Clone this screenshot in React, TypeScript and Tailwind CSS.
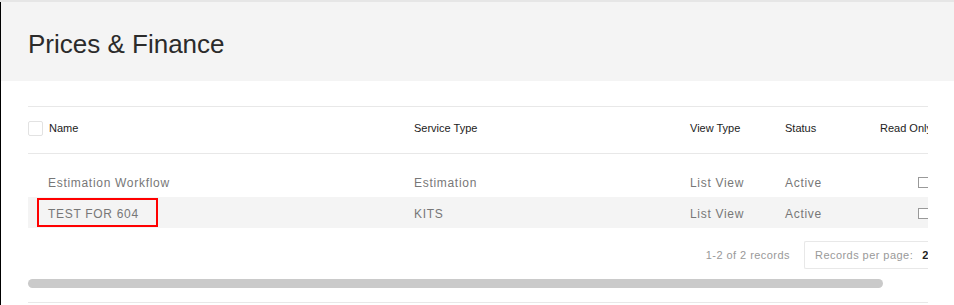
import React from "react";

type Row = { name: string; service: string; view: string; status: string; highlight?: boolean };

const rows: Array<Row> = [
  { name: "Estimation Workflow", service: "Estimation", view: "List View", status: "Active" },
  { name: "TEST FOR 604", service: "KITS", view: "List View", status: "Active", highlight: true },
];

export default function App() {
  return (
    <div className="w-[954px] h-[305px] overflow-hidden bg-white font-['Liberation_Sans',Arial,sans-serif]">
      <div className="h-[2px] bg-[#e6e6e6]" />
      <div className="h-[303px] border-l border-black">
        <div className="h-[79px] bg-[#f4f4f4] px-[27px] pt-[29px]">
          <h1 className="text-[26px] leading-[26px] text-[#2b2b2b] font-light">Prices &amp; Finance</h1>
        </div>

        <div className="pl-[27px] pr-[26px] pt-[25px]">
          <div className="overflow-hidden">
            <div className="w-[960px]">
              {/* header */}
              <div className="h-[48px] flex flex-row items-center border-t border-b border-[#e8e8e8] text-[11px] text-[#222] pb-[3px]">
                <div className="w-[386px] flex flex-row items-center">
                  <span className="w-[15px] h-[15px] border border-[#e2e2e2] rounded-[2px] bg-white" />
                  <span className="ml-[6px]">Name</span>
                </div>
                <div className="w-[276px]">Service Type</div>
                <div className="w-[95px]">View Type</div>
                <div className="w-[95px]">Status</div>
                <div className="flex-1">Read Only</div>
              </div>

              <div className="h-[12px]" />

              {rows.map((row) => {
                return (
                  <div
                    key={row.name}
                    className={`relative h-[31px] flex flex-row items-center pt-[2px] text-[12px] tracking-[0.7px] text-[#777] ${
                      row.highlight ? "bg-[#f4f4f4]" : ""
                    }`}
                  >
                    <div className="w-[386px] pl-[20px]">{row.name}</div>
                    <div className="w-[276px]">{row.service}</div>
                    <div className="w-[95px]">{row.view}</div>
                    <div className="w-[95px]">{row.status}</div>
                    <div className="flex-1 pl-[38px]">
                      <span className="block w-[11px] h-[11px] border border-[#999] bg-white" />
                    </div>
                    {row.highlight && (
                      <span className="absolute left-[9px] top-[1px] w-[121px] h-[29px] border-2 border-[#ff0000]" />
                    )}
                  </div>
                );
              })}
            </div>
          </div>

          {/* pagination */}
          <div className="mt-[13px] flex flex-row items-center justify-end h-[28px] overflow-hidden">
            <span className="text-[11px] tracking-[0.45px] text-[#999] mr-[14px]">1-2 of 2 records</span>
            <div className="w-[124px] h-[28px] border border-[#e8e8e8] border-r-0 rounded-l-[2px] flex flex-row items-center pl-[10px] whitespace-nowrap overflow-hidden">
              <span className="text-[11px] tracking-[0.45px] text-[#999]">Records per page:</span>
              <span className="ml-[9px] text-[11px] font-bold text-[#222]">25</span>
            </div>
          </div>

          {/* scrollbar */}
          <div className="mt-[10px] h-[9px] w-[855px] rounded-full bg-[#cacaca]" />

          <div className="mt-[14px] h-px bg-[#e8e8e8]" />
        </div>
      </div>
    </div>
  );
}
